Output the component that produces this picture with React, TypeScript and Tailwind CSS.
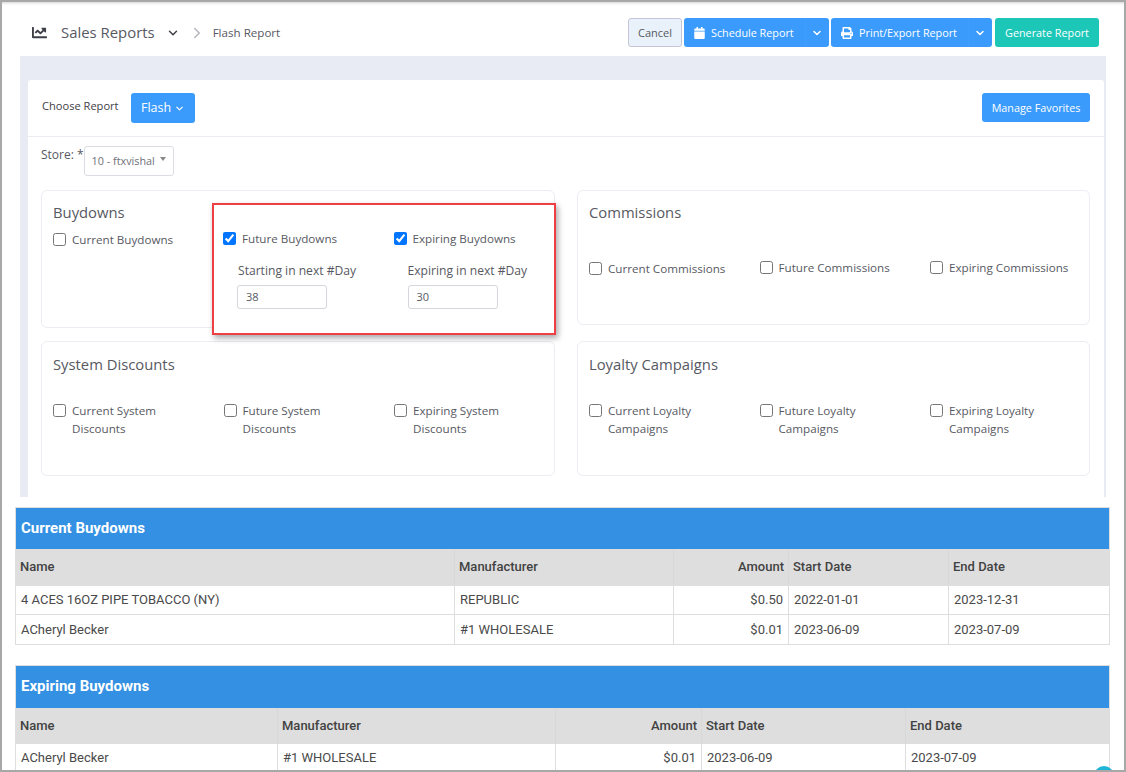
import { ChevronDown, ChevronRight } from "lucide-react";
import { FaCalendar, FaChartLine, FaPrint } from "react-icons/fa";

const sans = "font-['Open_Sans','Noto_Sans',sans-serif]";

function Check({ label, checked, className = "" }: { label: React.ReactNode; checked?: boolean; className?: string }) {
  return (
    <label className={"flex items-start gap-[6px] text-[11.65px] leading-[18px] text-[#575962] " + className}>
      <input type="checkbox" defaultChecked={checked} className="mt-[2px] h-[13px] w-[13px] shrink-0 accent-[#0075ff]" />
      <span>{label}</span>
    </label>
  );
}

function Panel({ title, height, children, gap, top = "pt-[12px]" }: { title: string; height: string; children: React.ReactNode; gap: string; top?: string }) {
  return (
    <div className={"rounded-[6px] border border-[#ebedf2] px-[11px] " + top + " " + height}>
      <h3 className="text-[14.8px] leading-[20px] text-[#575962]">{title}</h3>
      <div className={"grid grid-cols-[170.5px_170.5px_150px] " + gap}>{children}</div>
    </div>
  );
}

function SplitButton({ icon, label, main }: { icon: React.ReactNode; label: string; main: string }) {
  return (
    <div className="flex h-[29px] overflow-hidden rounded-[3px] bg-[#3a9bfd] text-white">
      <button className={"flex items-center gap-[6px] pl-[10px] pt-px text-[10.8px] " + main}>
        {icon}
        {label}
      </button>
      <span className="flex w-[24px] items-center justify-center border-l border-[#3f9efd] pr-px">
        <ChevronDown className="h-[12px] w-[12px]" strokeWidth={3} />
      </span>
    </div>
  );
}

function ReportTable({
  title,
  columns,
  titleHeight,
  headHeight,
  rows,
  rowHeights,
  className = "",
}: {
  title: string;
  columns: string;
  titleHeight: string;
  headHeight: string;
  rows: string[][];
  rowHeights: string[];
  className?: string;
}) {
  const heads = ["Name", "Manufacturer", "Amount", "Start Date", "End Date"];
  return (
    <section className={"mx-[15px] w-[1095px] border-x border-t border-[#dedede] font-['Roboto',sans-serif] text-[13px] " + className}>
      <div className={"flex items-center bg-[#3390e2] pl-[5px] text-[15px] font-bold text-white " + titleHeight}>{title}</div>
      <div className={"grid bg-[#dedede] font-medium text-[#424242] " + columns + " " + headHeight}>
        {heads.map((h, i) => (
          <div key={h} className={"flex items-center border-r border-[#d8d8d8] px-[4px] last:border-r-0 " + (i === 2 ? "justify-end" : "")}>
            {h}
          </div>
        ))}
      </div>
      {rows.map((row, r) => (
        <div key={r} className={"grid text-[#4a4a4a] " + columns + " " + rowHeights[r]}>
          {row.map((cell, i) => (
            <div
              key={i}
              className={"flex items-center border-r border-b border-[#dedede] px-[5px] last:border-r-0 " + (i === 2 ? "justify-end" : "")}
            >
              {cell}
            </div>
          ))}
        </div>
      ))}
    </section>
  );
}

export default function App() {
  return (
    <div className={"relative h-[772px] w-[1126px] overflow-hidden border-x-[2px] border-y-[2px] border-[#a8a8a8] bg-white " + sans}>
      <div className="shadow-[inset_0_3px_3px_-2px_rgba(0,0,0,0.18)]">
        {/* Header */}
        <header className="flex h-[54px] items-start justify-between pl-[30px] pr-[25px] pt-[16px]">
          <div className="flex h-[29px] items-center text-[#575962]">
            <FaChartLine className="h-[15px] w-[15px] text-[#3f4047]" />
            <span className="ml-[14px] text-[14.9px]">Sales Reports</span>
            <ChevronDown className="ml-[11px] h-[14px] w-[14px] text-[#3f4047]" strokeWidth={2.5} />
            <ChevronRight className="ml-[8px] h-[18px] w-[18px] text-[#b5b5bd]" />
            <span className="ml-[7px] text-[11.6px]">Flash Report</span>
          </div>
          <div className="flex items-center gap-[2px]">
            <button className="h-[29px] w-[54px] rounded-[3px] border border-[#c4c5d6] bg-[#e9f2fb] pt-px text-[11px] text-[#575962]">Cancel</button>
            <SplitButton icon={<FaCalendar className="h-[12px] w-[11px]" />} label="Schedule Report" main="w-[121px]" />
            <SplitButton icon={<FaPrint className="h-[12px] w-[12px]" />} label="Print/Export Report" main="w-[137px]" />
            <button className="ml-[1px] h-[29px] w-[104px] rounded-[3px] bg-[#1cc7b8] pt-px text-[10.8px] text-white">Generate Report</button>
          </div>
        </header>

        {/* Filter area */}
        <div className="ml-[18px] h-[441px] w-[1086px] bg-[#e9ebf4] pl-[8px] pr-[2px] pt-[24px]">
          <div className="h-[417px] rounded-t-[3px] bg-white">
            <div className="flex h-[57px] items-start justify-between border-b border-[#ebedf2] pl-[14px] pr-[14px] pt-[13px]">
              <div className="flex items-start gap-[12px]">
                <span className="mt-[5px] text-[11.1px] leading-[16px] text-[#3f4047]">Choose Report</span>
                <button className="flex h-[30px] w-[64px] items-center justify-center gap-[3px] rounded-[3px] bg-[#3a9bfd] pl-px pt-px text-[12.5px] text-white">
                  Flash
                  <ChevronDown className="h-[11px] w-[11px]" strokeWidth={2.5} />
                </button>
              </div>
              <button className="h-[29px] w-[108px] rounded-[3px] bg-[#3a9bfd] pt-px text-[10.8px] text-white">Manage Favorites</button>
            </div>

            <div className="flex h-[53px] items-start pl-[13px] pt-[9px]">
              <span className="mt-[1px] text-[12px] leading-[16px] text-[#575962]">Store: *</span>
              <div className="relative flex h-[30px] w-[90px] items-center rounded-[3px] border border-[#dcdce4] pl-[7px] text-[10.8px] text-[#6f7079]">
                10 - ftxvishal
                <span className="absolute right-[7px] top-[10px] h-0 w-0 border-x-[3px] border-t-[4px] border-x-transparent border-t-[#888]" />
              </div>
            </div>

            <div className="ml-[13px] flex w-[1049px] gap-[22px]">
              <div className="flex w-[514px] flex-col gap-[13px]">
                <Panel title="Buydowns" height="h-[138px]" gap="mt-[9px]" top="pt-[11px]">
                  <Check label="Current Buydowns" />
                </Panel>
                <Panel title="System Discounts" height="h-[135px]" gap="mt-[28px]">
                  <Check label={<>Current System<br />Discounts</>} />
                  <Check label={<>Future System<br />Discounts</>} />
                  <Check label={<>Expiring System<br />Discounts</>} />
                </Panel>
              </div>
              <div className="flex w-[513px] flex-col gap-[16px]">
                <Panel title="Commissions" height="h-[135px]" gap="mt-[38px]" top="pt-[11px]">
                  <Check label="Current Commissions" />
                  <Check label="Future Commissions" className="-mt-px" />
                  <Check label="Expiring Commissions" className="-mt-px" />
                </Panel>
                <Panel title="Loyalty Campaigns" height="h-[135px]" gap="mt-[28px]">
                  <Check label={<>Current Loyalty<br />Campaigns</>} />
                  <Check label={<>Future Loyalty<br />Campaigns</>} />
                  <Check label={<>Expiring Loyalty<br />Campaigns</>} />
                </Panel>
              </div>
            </div>
          </div>
        </div>
      </div>

      {/* Tables */}
      <div className="-ml-[2px] mt-[10px]">
        <ReportTable
          title="Current Buydowns"
          columns="grid-cols-[439px_219px_115px_160px_160px]"
          titleHeight="h-[41px]"
          headHeight="h-[37px] pb-[2px]"
          rowHeights={["h-[29px]", "h-[30px]"]}
          rows={[
            ["4 ACES 16OZ PIPE TOBACCO (NY)", "REPUBLIC", "$0.50", "2022-01-01", "2023-12-31"],
            ["ACheryl Becker", "#1 WHOLESALE", "$0.01", "2023-06-09", "2023-07-09"],
          ]}
        />
        <ReportTable
          className="mt-[20px]"
          title="Expiring Buydowns"
          columns="grid-cols-[262px_278px_146px_204px_203px]"
          titleHeight="h-[42px] pb-[2px]"
          headHeight="h-[36px]"
          rowHeights={["h-[28px]"]}
          rows={[["ACheryl Becker", "#1 WHOLESALE", "$0.01", "2023-06-09", "2023-07-09"]]}
        />
      </div>

      {/* Annotation pasted over the panel */}
      <div className="absolute left-[210px] top-[201px] h-[132px] w-[344px] border-2 border-[#ee3f45] bg-white pl-[9px] pt-[25px] shadow-[2px_3px_6px_rgba(0,0,0,0.35)]">
        <div className="grid grid-cols-[170.5px_150px]">
          <div>
            <Check label="Future Buydowns" checked />
            <div className="ml-[15px] mt-[14px] text-[12.1px] leading-[18px] text-[#575962]">Starting in next #Day</div>
            <div className="ml-[14px] mt-[5px] flex h-[24px] w-[90px] items-center rounded-[3px] border border-[#d5d5dc] pl-[8px] text-[11px] text-[#575962]">38</div>
          </div>
          <div>
            <Check label="Expiring Buydowns" checked />
            <div className="ml-[14px] mt-[14px] whitespace-nowrap text-[12.1px] leading-[18px] text-[#575962]">Expiring in next #Day</div>
            <div className="ml-[14px] mt-[5px] flex h-[24px] w-[90px] items-center rounded-[3px] border border-[#d5d5dc] pl-[8px] text-[11px] text-[#575962]">30</div>
          </div>
        </div>
      </div>

      {/* Chat bubble peeking in at the bottom */}
      <div className="absolute -bottom-[16px] right-[10px] h-[20px] w-[20px] rounded-full bg-[#1fb5d6]" />
    </div>
  );
}
